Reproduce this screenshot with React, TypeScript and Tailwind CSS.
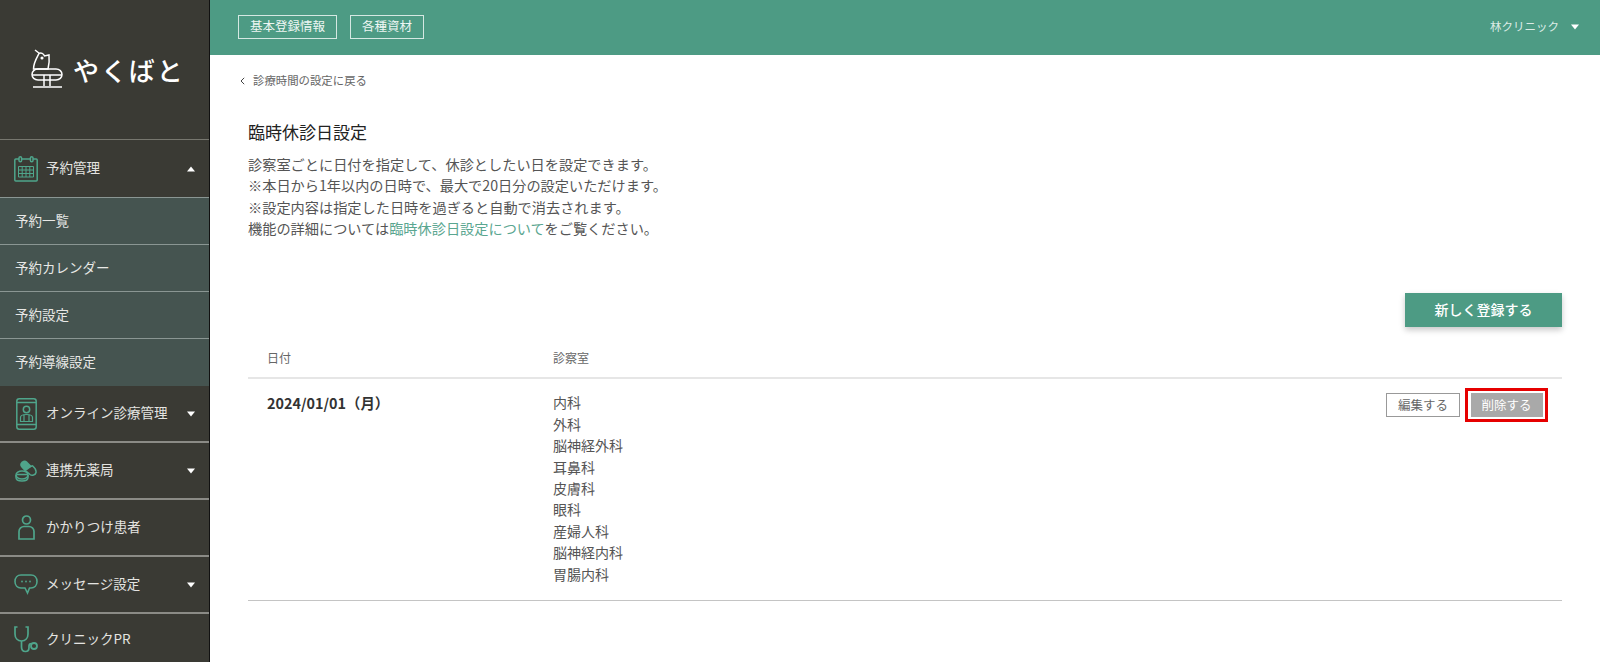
import React from "react";

const font = { fontFamily: '"Noto Sans CJK JP", "Noto Sans", sans-serif' };
const G = "#4fa58b";

const Tri = ({ up }: { up?: boolean }) => (
  <svg width="8" height="6" viewBox="0 0 8 6" className="shrink-0">
    <path d={up ? "M4 0.5L8 5.5H0z" : "M4 5.5L8 0.5H0z"} fill="#fff" />
  </svg>
);

const Logo = () => (
  <svg width="32" height="40" viewBox="0 0 32 40" fill="none" stroke="#fff" strokeWidth="1.5" className="shrink-0">
    <path d="M4 1L8.5 4.5" />
    <path d="M8 4.5C10 3.5 12.5 4.5 13.5 7L18 6C18.5 11 18 16 17 20H2.5C2.5 14 5 10 8 4.5z" />
    <circle cx="11" cy="9" r="0.8" fill="#fff" />
    <path d="M7 20H25C28.5 20 31 22.5 31 25.5C31 28.5 28.5 31 25 31H7C3.5 31 1 28.5 1 25.5C1 22.5 3.5 20 7 20z" />
    <path d="M1 26H31M13 26V37M19 26V37M2 38H31" />
  </svg>
);

const CalIcon = () => (
  <svg width="24" height="26" viewBox="0 0 24 26" fill="none" stroke={G} strokeWidth="1.5" className="shrink-0">
    <rect x="0.8" y="3" width="22.4" height="22" rx="1" />
    <rect x="5" y="0.8" width="2.6" height="5" rx="1.3" fill="#3a3a34" />
    <rect x="16.4" y="0.8" width="2.6" height="5" rx="1.3" fill="#3a3a34" />
    <path d="M4.5 10.5H19.5V21H4.5zM4.5 14H19.5M4.5 17.5H19.5M8.2 10.5V21M12 10.5V21M15.8 10.5V21" strokeWidth="1" />
  </svg>
);

const PhoneIcon = () => (
  <svg width="21" height="32" viewBox="0 0 21 32" fill="none" stroke={G} strokeWidth="1.5" className="shrink-0">
    <rect x="0.8" y="0.8" width="19.4" height="30.4" rx="2.5" />
    <path d="M0.8 4.5H20.2M0.8 26.5H20.2" />
    <circle cx="10.5" cy="11.5" r="3.2" />
    <path d="M4.5 23.5V19.5C4.5 17.5 7 16.5 10.5 16.5S16.5 17.5 16.5 19.5V23.5zM8 17V23.5M13 17V23.5" strokeWidth="1.2" />
  </svg>
);

const PillIcon = () => (
  <svg width="22" height="22" viewBox="0 0 22 22" className="shrink-0">
    <path d="M7 1.5C9 0 11 0.5 12.5 2L17 6.5L10 11.5L6 7C4.5 5 5 3 7 1.5z" fill={G} />
    <path d="M12 7.5L17.5 5.8C20 8 21.5 10 21 12.5C20.5 15 17 16 15 14.5L11 11" fill="none" stroke={G} strokeWidth="1.5" />
    <ellipse cx="7" cy="15" rx="6" ry="4" fill="none" stroke={G} strokeWidth="1.5" />
    <path d="M1 15V17.5C1 19.5 3.5 21 7 21S13 19.5 13 17.5V15M1.5 14.5H12.5" fill="none" stroke={G} strokeWidth="1.5" />
  </svg>
);

const PersonIcon = () => (
  <svg width="17" height="25" viewBox="0 0 17 25" fill="none" stroke={G} strokeWidth="1.7" className="shrink-0">
    <circle cx="8.5" cy="5" r="4" />
    <path d="M1 24V16.5C1 13.5 3.5 11.5 6 11.5H11C13.5 11.5 16 13.5 16 16.5V24z" />
  </svg>
);

const ChatIcon = () => (
  <svg width="24" height="21" viewBox="0 0 24 21" fill="none" stroke={G} strokeWidth="1.6" className="shrink-0">
    <path d="M7 1H17C20.5 1 23 3.5 23 7.5S20.5 14 17 14H15.5L13.5 19L11 14H7C3.5 14 1 11.5 1 7.5S3.5 1 7 1z" />
    <circle cx="8" cy="7.5" r="0.9" fill={G} stroke="none" />
    <circle cx="12" cy="7.5" r="0.9" fill={G} stroke="none" />
    <circle cx="16" cy="7.5" r="0.9" fill={G} stroke="none" />
  </svg>
);

const StethIcon = () => (
  <svg width="24" height="27" viewBox="0 0 24 27" fill="none" stroke={G} strokeWidth="1.7" className="shrink-0">
    <path d="M3.5 1H1V8C1 12 3.5 15 7.5 15S14 12 14 8V1H11.5" />
    <path d="M7.5 15V21C7.5 24 9.5 25.5 11.5 25.5C14 25.5 15 24 15 21.5V20C15 18.5 16 17.5 17.5 17.5" />
    <circle cx="20" cy="20" r="3" strokeWidth="1.8" />
  </svg>
);

const NavRow = ({ icon, label, arrow, cls, up }: { icon: React.ReactNode; label: string; arrow?: boolean; cls: string; up?: boolean }) => (
  <div className={`flex shrink-0 items-center ${cls}`}>
    <div className="flex w-[46px] shrink-0 items-center justify-center pl-[6px]">{icon}</div>
    <span className="pb-[2px] text-[13.5px] text-[#e4e4e1] whitespace-nowrap">{label}</span>
    {arrow && (
      <span className="ml-auto mr-[14px]">
        <Tri up={up} />
      </span>
    )}
  </div>
);

const subs = ["予約一覧", "予約カレンダー", "予約設定", "予約導線設定"];
const depts = ["内科", "外科", "脳神経外科", "耳鼻科", "皮膚科", "眼科", "産婦人科", "脳神経内科", "胃腸内科"];

export default function App() {
  return (
    <div className="flex h-[662px] w-[1600px] overflow-hidden bg-white" style={font}>
      <aside className="flex h-full w-[210px] shrink-0 flex-col border-r border-[#111] bg-[#3a3a34]">
        <div className="flex h-[140px] shrink-0 items-center gap-[10px] border-b border-[#77776f] pl-[31px] pb-[1px]">
          <Logo />
          <span className="text-[26px] font-medium tracking-[1.9px] text-white">やくばと</span>
        </div>
        <NavRow cls="h-[57px]" icon={<CalIcon />} label="予約管理" arrow up />
        <div className="flex shrink-0 flex-col bg-[#455450] pb-[1px]">
          {subs.map((s) => (
            <div key={s} className="flex h-[47px] items-center border-t border-[#8a9693] pb-[2px] pl-[15px] text-[13.5px] text-[#e8e8e6]">
              {s}
            </div>
          ))}
        </div>
        <NavRow cls="h-[57px] border-b-2 border-[#8b8b86]" icon={<PhoneIcon />} label="オンライン診療管理" arrow />
        <NavRow cls="h-[57px] border-b-2 border-[#8b8b86]" icon={<PillIcon />} label="連携先薬局" arrow />
        <NavRow cls="h-[57px] border-b-2 border-[#8b8b86]" icon={<PersonIcon />} label="かかりつけ患者" />
        <NavRow cls="h-[57px] border-b-2 border-[#8b8b86]" icon={<ChatIcon />} label="メッセージ設定" arrow />
        <NavRow cls="h-[50px] border-b border-[#77776f] pt-[1px]" icon={<StethIcon />} label="クリニックPR" />
      </aside>

      <div className="flex min-w-0 flex-1 flex-col">
        <header className="flex h-[55px] shrink-0 items-center bg-[#4d9b84] pb-[2px] pl-[28px] pr-[21px]">
          <div className="flex gap-[13px]">
            <span className="flex h-[24px] w-[99px] items-center justify-center border border-[#d5e8e2] text-[12.5px] text-[#eef6f3]">基本登録情報</span>
            <span className="flex h-[24px] w-[74px] items-center justify-center border border-[#d5e8e2] text-[12.5px] text-[#eef6f3]">各種資材</span>
          </div>
          <div className="ml-auto flex items-center gap-[12px] text-[11.5px] text-[#dcebe6]">
            <span>林クリニック</span>
            <Tri />
          </div>
        </header>

        <main className="flex min-h-0 flex-1 flex-col pr-[38px]">
          <div className="mt-[17px] flex h-[17px] items-center pl-[30px] text-[11.4px] text-[#666]">
            <svg width="5" height="8" viewBox="0 0 5 8" fill="none" stroke="#444" strokeWidth="1" className="mr-[8px]">
              <path d="M4.2 0.8L1 4L4.2 7.2" />
            </svg>
            診療時間の設定に戻る
          </div>

          <div className="pl-[38px]">
            <h1 className="mt-[31px] text-[17px] font-normal leading-[24px] text-[#222]">臨時休診日設定</h1>
            <div className="mt-[10px] text-[14.2px] leading-[21.3px] text-[#555]">
              <p>診察室ごとに日付を指定して、休診としたい日を設定できます。</p>
              <p>※本日から1年以内の日時で、最大で20日分の設定いただけます。</p>
              <p>※設定内容は指定した日時を過ぎると自動で消去されます。</p>
              <p>
                機能の詳細については<span className="text-[#5aa690]">臨時休診日設定について</span>をご覧ください。
              </p>
            </div>

            <div className="mt-[54px] flex justify-end">
              <button className="flex h-[34px] w-[157px] items-center justify-center bg-[#4d9b84] pb-[2px] text-[14px] font-medium text-white shadow-[0_3px_6px_rgba(0,0,0,0.22)]">
                新しく登録する
              </button>
            </div>

            <div className="mt-[14px] flex h-[38px] items-center border-b-2 border-[#e6e6e6] pb-[2px] text-[12px] text-[#666]">
              <span className="w-[305px] pl-[19px]">日付</span>
              <span>診察室</span>
            </div>

            <div className="flex border-b border-[#c4c4c4] pb-[15px]">
              <div className="w-[305px] pl-[19px] pt-[14px] text-[14.4px] font-bold leading-[20px] text-[#333]">2024/01/01（月）</div>
              <div className="flex flex-col pt-[13px] text-[14px] leading-[21.45px] text-[#555]">
                {depts.map((d) => (
                  <span key={d}>{d}</span>
                ))}
              </div>
              <div className="ml-auto mr-[14px] mt-[9px] flex items-start gap-[5px]">
                <button className="mt-[5px] flex h-[24px] w-[74px] items-center justify-center border border-[#999] text-[12.5px] text-[#666]">編集する</button>
                <div className="flex h-[34px] w-[83px] items-center justify-center border-[3px] border-[#e60000]">
                  <button className="flex h-[24px] w-[72px] items-center justify-center bg-[#a9a9a9] text-[12.5px] text-white">削除する</button>
                </div>
              </div>
            </div>
          </div>
        </main>
      </div>
    </div>
  );
}
